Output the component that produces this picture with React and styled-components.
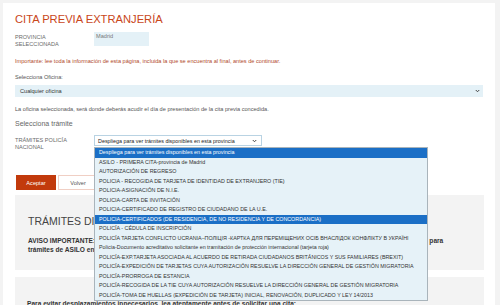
import React from 'react';
import styled, { createGlobalStyle } from 'styled-components';

const GlobalStyle = createGlobalStyle`
  html, body {
    margin: 0;
    padding: 0;
    background: #f3f3f3;
    font-family: "Liberation Sans", Arial, sans-serif;
    overflow: hidden;
  }
`;

const Card = styled.div`
  margin: 3px 5px 0 3px;
  background: #fff;
  padding: 9px 11px 0 12px;
  height: 320px;
`;

const Title = styled.h1`
  margin: 0;
  font-size: 11.2px;
  line-height: 14px;
  font-weight: normal;
  color: #c9471a;
`;

const Row = styled.div`
  display: flex;
  align-items: flex-start;
  margin-top: ${(p) => p.$top}px;
`;

const Label = styled.div`
  width: 79px;
  font-size: 5.6px;
  line-height: 7px;
  color: #6b6b6b;
  text-transform: uppercase;
  padding-top: ${(p) => p.$pad || 0}px;
`;

const ValueBox = styled.div`
  width: 53px;
  height: 14px;
  padding-left: 2px;
  background: #e4f1f7;
  font-size: 5.6px;
  line-height: 9px;
  color: #777;
`;

const Note = styled.p`
  margin: ${(p) => p.$top}px 0 0;
  font-size: 5.6px;
  line-height: 8px;
  color: ${(p) => p.$color || '#555'};
`;

const SubTitle = styled.p`
  margin: ${(p) => p.$top}px 0 0;
  font-size: 7px;
  line-height: 9px;
  color: #666;
`;

const WideSelect = styled.div`
  margin-top: 4px;
  width: 468px;
  height: 12px;
  background: #e4f1f7;
  display: flex;
  align-items: center;
  justify-content: space-between;
  padding: 0 3px 0 5px;
  box-sizing: border-box;
  font-size: 5.6px;
  color: #333;
`;

const Chevron = () => (
  <svg width="5" height="4" viewBox="0 0 10 7">
    <path d="M1.5 1.5 L5 5 L8.5 1.5" fill="none" stroke="#444" strokeWidth="2" />
  </svg>
);

const SelectWrap = styled.div`
  position: relative;
`;

const Trigger = styled.div`
  width: 168px;
  height: 11px;
  box-sizing: border-box;
  border: 1px solid #b9d3e3;
  background: #fff;
  display: flex;
  align-items: center;
  justify-content: space-between;
  padding: 0 4px 0 3px;
  font-size: 5.4px;
  color: #222;
`;

const ListBox = styled.ul`
  position: absolute;
  z-index: 5;
  left: 0;
  top: 12px;
  width: 334px;
  margin: 0;
  padding: 0;
  list-style: none;
  background: #e6f2f8;
  border: 1px solid #a9b4bb;
  box-sizing: border-box;
`;

const Option = styled.li`
  height: 9.5px;
  line-height: 9.5px;
  padding-left: 4px;
  font-size: 5.35px;
  white-space: nowrap;
  color: ${(p) => (p.$active ? '#fff' : '#333')};
  background: ${(p) => (p.$active ? '#1b6fc6' : 'transparent')};
`;

const Buttons = styled.div`
  display: flex;
  gap: 2px;
  margin-top: 24px;
  margin-left: 1px;
`;

const Button = styled.div`
  width: ${(p) => p.$w}px;
  height: 15px;
  box-sizing: border-box;
  display: flex;
  align-items: center;
  justify-content: center;
  font-size: 5.6px;
  background: ${(p) => (p.$primary ? '#c23a0c' : '#fff')};
  color: ${(p) => (p.$primary ? '#fff' : '#555')};
  border: 1px solid ${(p) => (p.$primary ? '#c23a0c' : '#f0cfc4')};
`;

const InfoBox = styled.div`
  margin-top: ${(p) => p.$top}px;
  width: 469px;
  height: ${(p) => p.$h}px;
  background: #f3f3f3;
  padding: ${(p) => p.$pad};
  box-sizing: border-box;
`;

const BoxHeading = styled.h2`
  margin: 0;
  font-size: 10.5px;
  line-height: 12px;
  font-weight: normal;
  color: #444;
`;

const BoxText = styled.p`
  margin: ${(p) => p.$top || 0}px 0 0;
  font-size: 6.6px;
  line-height: 8.5px;
  font-weight: bold;
  color: #333;
`;

const options = [
  'Despliega para ver trámites disponibles en esta provincia',
  'ASILO - PRIMERA CITA-provincia de Madrid',
  'AUTORIZACIÓN DE REGRESO',
  'POLICIA - RECOGIDA DE TARJETA DE IDENTIDAD DE EXTRANJERO (TIE)',
  'POLICIA-ASIGNACIÓN DE N.I.E.',
  'POLICIA-CARTA DE INVITACIÓN',
  'POLICIA-CERTIFICADO DE REGISTRO DE CIUDADANO DE LA U.E.',
  'POLICIA-CERTIFICADOS (DE RESIDENCIA, DE NO RESIDENCIA Y DE CONCORDANCIA)',
  'POLICÍA - CÉDULA DE INSCRIPCIÓN',
  'POLICÍA TARJETA CONFLICTO UCRANIA–ПОЛІЦІЯ -КАРТКА ДЛЯ ПЕРЕМІЩЕНИХ ОСІБ ВНАСЛІДОК КОНФЛІКТУ В УКРАЇНІ',
  'Policía-Documento acreditativo solicitante en tramitación de protección internacional (tarjeta roja)',
  'POLICÍA-EXP.TARJETA ASOCIADA AL ACUERDO DE RETIRADA CIUDADANOS BRITÁNICOS Y SUS FAMILIARES (BREXIT)',
  'POLICÍA-EXPEDICIÓN DE TARJETAS CUYA AUTORIZACIÓN RESUELVE LA DIRECCIÓN GENERAL DE GESTIÓN MIGRATORIA',
  'POLICÍA-PRORROGA DE ESTANCIA',
  'POLICÍA-RECOGIDA DE LA TIE CUYA AUTORIZACIÓN RESUELVE LA DIRECCIÓN GENERAL DE GESTIÓN MIGRATORIA',
  'POLICÍA-TOMA DE HUELLAS (EXPEDICIÓN DE TARJETA) INICIAL, RENOVACIÓN, DUPLICADO Y LEY 14/2013',
];

const active = [0, 7];

const App = () => (
  <>
    <GlobalStyle />
    <Card>
      <Title>CITA PREVIA EXTRANJERÍA</Title>

      <Row $top={6}>
        <Label $pad={2}>Provincia<br />seleccionada</Label>
        <ValueBox>Madrid</ValueBox>
      </Row>

      <Note $top={9} $color="#b1492a">
        Importante: lee toda la información de esta página, incluida la que se encuentra al final, antes de continuar.
      </Note>

      <Note $top={8}>Selecciona Oficina:</Note>
      <WideSelect>
        <span>Cualquier oficina</span>
        <Chevron />
      </WideSelect>

      <Note $top={8}>La oficina seleccionada, será donde deberás acudir el día de presentación de la cita previa concedida.</Note>
      <SubTitle $top={6}>Selecciona trámite</SubTitle>

      <Row $top={7}>
        <Label $pad={2}>Trámites Policía<br />Nacional</Label>
        <SelectWrap>
          <Trigger>
            <span>Despliega para ver trámites disponibles en esta provincia</span>
            <Chevron />
          </Trigger>
          <ListBox>
            {options.map((o, i) => (
              <Option key={o} $active={active.includes(i)}>{o}</Option>
            ))}
          </ListBox>
        </SelectWrap>
      </Row>

      <Buttons>
        <Button $primary $w={40}>Aceptar</Button>
        <Button $w={40}>Volver</Button>
      </Buttons>

      <InfoBox $top={5} $h={75} $pad="20px 13px 0">
        <BoxHeading>TRÁMITES DISPONIBLES</BoxHeading>
        <BoxText $top={10}>
          AVISO IMPORTANTE: solo se podrá solicitar cita previa a través de esta página web oficial de la Sede Electrónica del Ministerio para<br />
          trámites de ASILO en los puntos habilitados por la Policía Nacional.
        </BoxText>
      </InfoBox>

      <InfoBox $top={7} $h={60} $pad="23px 12px 0">
        <BoxText>Para evitar desplazamientos innecesarios, lea atentamente antes de solicitar una cita:</BoxText>
      </InfoBox>
    </Card>
  </>
);

export default App;
